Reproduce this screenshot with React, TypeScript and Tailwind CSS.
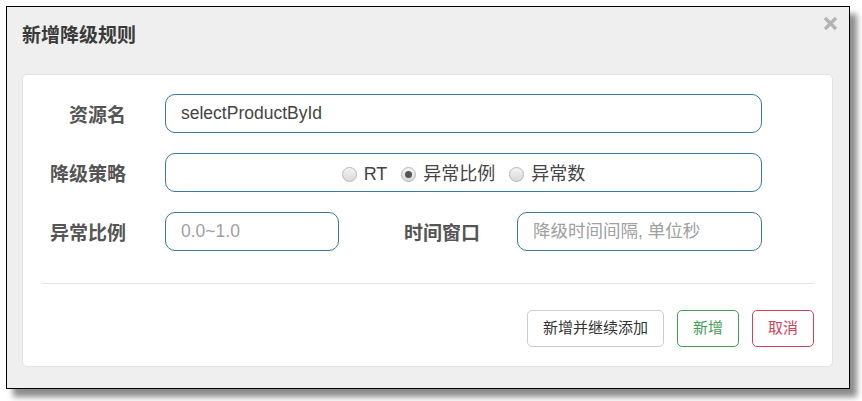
import React from "react";

const font = { fontFamily: '"Liberation Sans", "Noto Sans CJK SC", sans-serif' };

function Radio({ checked, label }: { checked?: boolean; label: string }) {
  return (
    <label className="flex items-center">
      <span className="relative w-[15px] h-[15px] rounded-full border border-[#b5b5b5] bg-gradient-to-b from-[#f4f4f4] to-[#d9d9d9] flex items-center justify-center">
        {checked && <span className="w-[7px] h-[7px] rounded-full bg-[#555]" />}
      </span>
      <span className="ml-[7px] text-[18px] text-[#444]">{label}</span>
    </label>
  );
}

function Field({ label, children }: { label: string; children: React.ReactNode }) {
  return (
    <div className="flex items-center h-[39px]">
      <div className="w-[84px] text-right text-[19px] font-bold text-[#555] pt-[6px]">{label}</div>
      <div className="ml-[39px]">{children}</div>
    </div>
  );
}

export default function App() {
  return (
    <div className="w-[862px] h-[401px] bg-white pt-[6px] pl-[6px]" style={font}>
      <div className="relative w-[844px] h-[383px] border-[1.5px] border-black bg-[#efefef] shadow-[7px_8px_6px_rgba(0,0,0,0.45)]">
        {/* header */}
        <div className="h-[67px] pl-[15px] pt-[15px]">
          <h4 className="text-[19px] font-bold text-[#3a3a3a] leading-[27px]">新增降级规则</h4>
        </div>
        <button className="absolute right-[10px] top-[7px] w-[18px] h-[18px] flex items-center justify-center">
          <svg width="15" height="15" viewBox="0 0 15 15">
            <path d="M2 2 L13 13 M13 2 L2 13" stroke="#b3b3b3" strokeWidth="3.2" strokeLinecap="butt" />
          </svg>
        </button>

        {/* body card */}
        <div className="mx-[15px] h-[293px] w-[811px] bg-white rounded-[5px] border border-[#e3e3e3] px-[19px] pt-[19px]">
          <div className="flex flex-col gap-[20px]">
            <Field label="资源名">
              <input
                readOnly
                value="selectProductById"
                className="w-[597px] h-[39px] rounded-[10px] border border-[#3b77a3] px-[15px] text-[17.5px] text-[#444] outline-none"
              />
            </Field>
            <Field label="降级策略">
              <div className="w-[597px] h-[39px] rounded-[10px] border border-[#3b77a3] flex items-center justify-center gap-[14px] pt-[3px]">
                <Radio label="RT" />
                <Radio checked label="异常比例" />
                <Radio label="异常数" />
              </div>
            </Field>
            <div className="flex items-center h-[39px]">
              <div className="w-[84px] text-right text-[19px] font-bold text-[#555] pt-[6px]">异常比例</div>
              <input
                readOnly
                placeholder="0.0~1.0"
                className="ml-[39px] w-[174px] h-[39px] rounded-[10px] border border-[#3b77a3] px-[15px] text-[17.5px] text-[#444] placeholder:text-[#a0a0a0] outline-none"
              />
              <div className="w-[141px] text-right text-[19px] font-bold text-[#555] pt-[6px]">时间窗口</div>
              <input
                readOnly
                placeholder="降级时间间隔, 单位秒"
                className="ml-[37px] w-[245px] h-[39px] rounded-[10px] border border-[#3b77a3] px-[15px] text-[17.5px] text-[#444] placeholder:text-[#a0a0a0] outline-none"
              />
            </div>
          </div>

          <div className="mt-[32px] border-t border-[#e5e5e5] w-[772px]" />

          <div className="mt-[26px] flex justify-end gap-[13px] w-[772px]">
            <button className="w-[137px] h-[37px] rounded-[5px] border border-[#cccccc] bg-white text-[15px] text-[#333]">
              新增并继续添加
            </button>
            <button className="w-[62px] h-[37px] rounded-[5px] border border-[#3f9f55] bg-white text-[15px] text-[#3f9f55]">
              新增
            </button>
            <button className="w-[62px] h-[37px] rounded-[5px] border border-[#cf4257] bg-white text-[15px] text-[#cf4257]">
              取消
            </button>
          </div>
        </div>
      </div>
    </div>
  );
}
